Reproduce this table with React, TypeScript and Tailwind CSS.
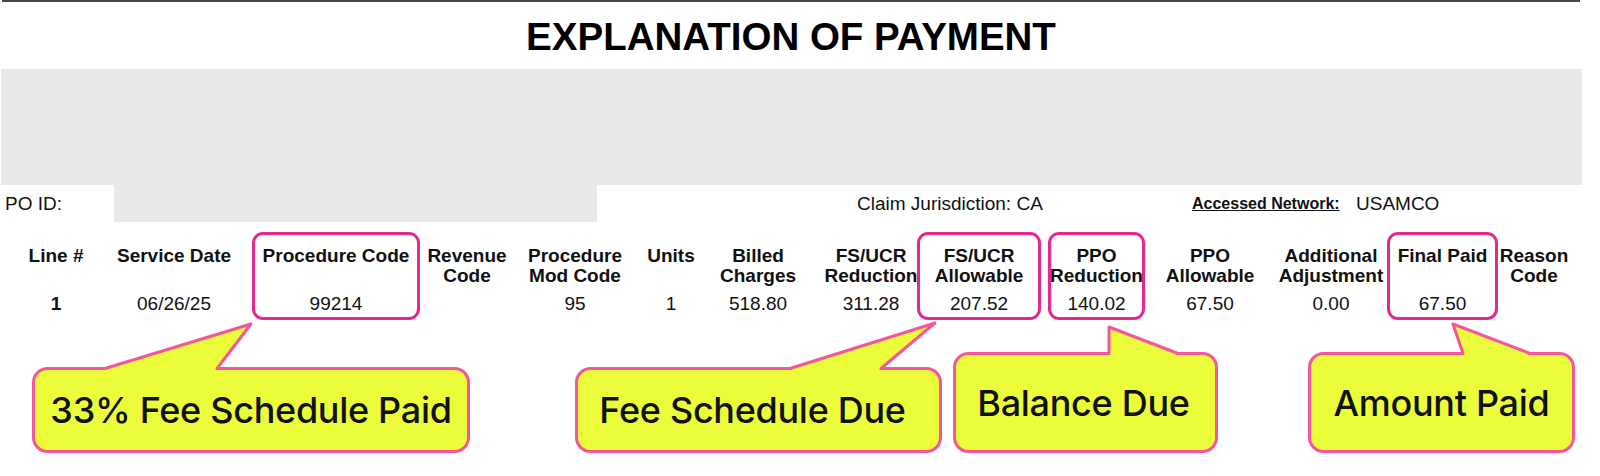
import React from 'react';

type Column = {
  cls: string;
  head: string[];
  value: string;
  boxed?: boolean;
  boldValue?: boolean;
};

const columns: Column[] = [
  { cls: 'w-[112px]', head: ['Line #'], value: '1', boldValue: true },
  { cls: 'w-[124px]', head: ['Service Date'], value: '06/26/25' },
  { cls: 'w-[168px] ml-[16px]', head: ['Procedure Code'], value: '99214', boxed: true },
  { cls: 'w-[94px]', head: ['Revenue', 'Code'], value: '' },
  { cls: 'w-[122px]', head: ['Procedure', 'Mod Code'], value: '95' },
  { cls: 'w-[70px]', head: ['Units'], value: '1' },
  { cls: 'w-[104px]', head: ['Billed', 'Charges'], value: '518.80' },
  { cls: 'w-[92px] ml-[15px]', head: ['FS/UCR', 'Reduction'], value: '311.28' },
  { cls: 'w-[124px]', head: ['FS/UCR', 'Allowable'], value: '207.52', boxed: true },
  { cls: 'w-[97px] ml-[7px]', head: ['PPO', 'Reduction'], value: '140.02', boxed: true },
  { cls: 'w-[130px]', head: ['PPO', 'Allowable'], value: '67.50' },
  { cls: 'w-[112px]', head: ['Additional', 'Adjustment'], value: '0.00' },
  { cls: 'w-[111px]', head: ['Final Paid'], value: '67.50', boxed: true },
  { cls: 'w-[72px]', head: ['Reason', 'Code'], value: '' },
];

type Callout = {
  label: string;
  cls: string;
  w: number;
  h: number;
  // tail: base left, base right, tip (box-local coords)
  tail: [number, number, number, number];
};

const callouts: Callout[] = [
  { label: '33% Fee Schedule Paid', cls: 'ml-[32px] w-[438px] h-[86px]', w: 438, h: 86, tail: [73, 185, 219, -43] },
  { label: 'Fee Schedule Due', cls: 'ml-[105px] w-[367px] h-[86px] pr-[12px]', w: 367, h: 86, tail: [215, 306, 360, -44] },
  { label: 'Balance Due', cls: 'ml-[11px] w-[265px] h-[101px] pr-[4px]', w: 265, h: 101, tail: [156, 225, 156, -25] },
  { label: 'Amount Paid', cls: 'ml-[90px] w-[267px] h-[101px]', w: 267, h: 101, tail: [155, 222, 145, -28] },
];

function bubblePath(w: number, h: number, tail: [number, number, number, number]) {
  const s = 1.5;
  const r = 14;
  const [b1, b2, tx, ty] = tail;
  return [
    `M ${s + r} ${s}`,
    `L ${b1} ${s}`,
    `L ${tx} ${ty}`,
    `L ${b2} ${s}`,
    `L ${w - s - r} ${s}`,
    `A ${r} ${r} 0 0 1 ${w - s} ${s + r}`,
    `L ${w - s} ${h - s - r}`,
    `A ${r} ${r} 0 0 1 ${w - s - r} ${h - s}`,
    `L ${s + r} ${h - s}`,
    `A ${r} ${r} 0 0 1 ${s} ${h - s - r}`,
    `L ${s} ${s + r}`,
    `A ${r} ${r} 0 0 1 ${s + r} ${s}`,
    'Z',
  ].join(' ');
}

function CalloutBubble({ callout }: { callout: Callout }) {
  return (
    <div className={`relative flex items-center justify-center ${callout.cls}`}>
      <svg
        className="absolute left-0 top-0 overflow-visible"
        width={callout.w}
        height={callout.h}
        viewBox={`0 0 ${callout.w} ${callout.h}`}
      >
        <path
          d={bubblePath(callout.w, callout.h, callout.tail)}
          fill="#ebfd3a"
          stroke="#f4559b"
          strokeWidth={3}
          strokeLinejoin="round"
        />
      </svg>
      <span className="relative font-['Inter',sans-serif] text-[36px] font-medium leading-none tracking-[-0.3px] text-[#111] whitespace-nowrap">
        {callout.label}
      </span>
    </div>
  );
}

export default function App() {
  return (
    <div className="w-[1600px] h-[476px] bg-white font-['Liberation_Sans',Arial,sans-serif] text-[#111] overflow-hidden">
      {/* Top rule */}
      <div className="ml-[2px] w-[1578px] h-[2px] bg-[#474747]" />

      {/* Title */}
      <div className="mt-[13px] w-[1582px] text-center text-[38.5px] leading-[44px] font-bold text-black">
        EXPLANATION OF PAYMENT
      </div>

      {/* Redacted block */}
      <div className="mt-[10px] ml-[1px] w-[1581px] h-[116px] bg-[#e9e9e9]" />

      {/* PO row */}
      <div className="flex items-center h-[37px] text-[19px] leading-[22px]">
        <div className="w-[114px] pl-[5px]">PO ID:</div>
        <div className="w-[483px] h-full bg-[#e9e9e9]" />
        <div className="ml-[260px] w-[335px] whitespace-nowrap">Claim Jurisdiction: CA</div>
        <div className="w-[164px] text-[16px] font-bold underline whitespace-nowrap">Accessed Network:</div>
        <div>USAMCO</div>
      </div>

      {/* Line items */}
      <div className="mt-[10px] flex items-start">
        {columns.map((col, i) => (
          <div
            key={i}
            className={`${col.cls} flex flex-col items-center ${
              col.boxed
                ? 'border-[3px] border-[#e6278d] rounded-[11px] pt-[11px] pb-[3px]'
                : 'pt-[14px] pb-[6px]'
            }`}
          >
            <div className="h-[40px] flex flex-col items-center text-[19px] leading-[20px] font-bold">
              {col.head.map(line => (
                <span key={line} className="whitespace-nowrap">
                  {line}
                </span>
              ))}
            </div>
            <div
              className={`mt-[8px] h-[20px] text-[19px] leading-[20px] whitespace-nowrap ${
                col.boldValue ? 'font-bold' : ''
              }`}
            >
              {col.value}
            </div>
          </div>
        ))}
      </div>

      {/* Annotation callouts */}
      <div className="flex items-end h-[133px]">
        {callouts.map(c => (
          <CalloutBubble key={c.label} callout={c} />
        ))}
      </div>
    </div>
  );
}
